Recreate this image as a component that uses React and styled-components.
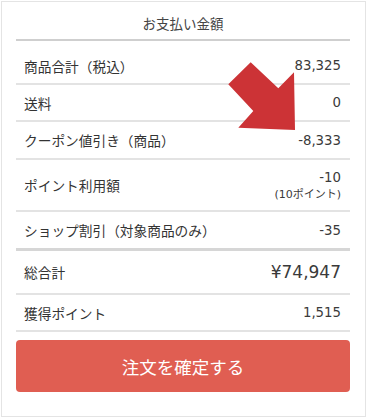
import React from 'react';
import styled, { createGlobalStyle } from 'styled-components';

const GlobalStyle = createGlobalStyle`
  html, body {
    margin: 0;
    padding: 0;
    background: #ffffff;
  }
  body {
    font-family: "DejaVu Sans", "Noto Sans CJK JP", sans-serif;
    color: #333333;
  }
`;

const Card = styled.div`
  position: relative;
  box-sizing: border-box;
  width: 365px;
  height: 416px;
  margin: 1px 0 0 1px;
  border: 1px solid #e4e4e4;
  background: #ffffff;
  padding: 0 15px 24px 14px;
  display: flex;
  flex-direction: column;
`;

const Header = styled.div`
  box-sizing: border-box;
  height: 39px;
  padding-top: 5px;
  border-bottom: 2px solid #cfcfcf;
  display: flex;
  align-items: center;
  justify-content: center;
  font-family: "Noto Sans CJK JP", sans-serif;
  font-size: 13.5px;
  color: #444444;
`;

const Row = styled.div`
  box-sizing: border-box;
  height: ${(p) => p.$h}px;
  padding: ${(p) => p.$top || 0}px 9px 0 8px;
  border-bottom: ${(p) => (p.$thick ? '3px solid #d6d6d6' : '2px solid #e3e3e3')};
  display: flex;
  align-items: center;
  justify-content: space-between;
`;

const Label = styled.span`
  font-family: "Noto Sans CJK JP", sans-serif;
  font-size: 13.7px;
  color: #333333;
`;

const Value = styled.div`
  display: flex;
  flex-direction: column;
  align-items: flex-end;
  font-size: ${(p) => (p.$big ? 17 : 13.3)}px;
  line-height: 17px;
  color: #3a3a3a;
`;

const SubNote = styled.span`
  font-size: 11px;
  line-height: 14px;
  margin-top: 2px;
`;

const ConfirmButton = styled.button`
  margin-top: 8px;
  height: 52px;
  width: 100%;
  border: none;
  border-radius: 4px;
  background: #e05e52;
  color: #ffffff;
  font-family: "Noto Sans CJK JP", sans-serif;
  font-size: 17.5px;
  cursor: pointer;
`;

const Arrow = styled.svg`
  position: absolute;
  left: 226px;
  top: 60px;
  width: 70px;
  height: 72px;
  pointer-events: none;
`;

const rows = [
  { label: '商品合計（税込）', value: '83,325', h: 44, top: 7 },
  { label: '送料', value: '0', h: 37 },
  { label: 'クーポン値引き（商品）', value: '-8,333', h: 38 },
  { label: 'ポイント利用額', value: '-10', note: '(10ポイント)', h: 52 },
  { label: 'ショップ割引（対象商品のみ）', value: '-35', h: 39, thick: true },
  { label: '総合計', value: '¥74,947', h: 44, big: true },
  { label: '獲得ポイント', value: '1,515', h: 37 },
];

export default function App() {
  return (
    <>
      <GlobalStyle />
      <Card>
        <Header>お支払い金額</Header>
        {rows.map((r) => (
          <Row key={r.label} $h={r.h} $top={r.top} $thick={r.thick}>
            <Label>{r.label}</Label>
            <Value $big={r.big}>
              <span>{r.value}</span>
              {r.note && <SubNote>{r.note}</SubNote>}
            </Value>
          </Row>
        ))}
        <ConfirmButton>注文を確定する</ConfirmButton>
        <Arrow viewBox="228 62 70 72">
          <polygon
            points="250.7,62.3 228.3,84.3 253.3,111 238.3,127.7 295,130 294,72.3 278.3,88.3"
            fill="#cc3336"
          />
        </Arrow>
      </Card>
    </>
  );
}
